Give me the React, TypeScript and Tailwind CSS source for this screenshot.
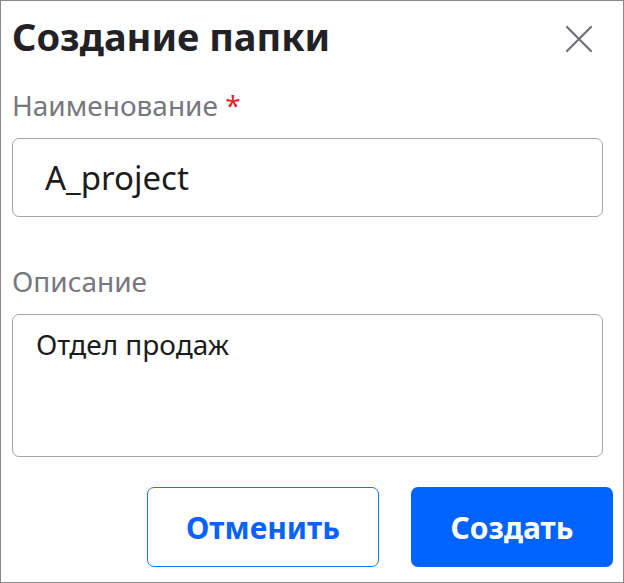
import React from "react";

export default function App() {
  return (
    <div
      className="w-[624px] h-[583px] border border-[#8a8a8a] bg-white flex flex-col"
      style={{ fontFamily: '"Noto Sans", "Open Sans", sans-serif' }}
    >
      <div className="flex items-center justify-between pl-[11px] pr-[30px] h-[69px]">
        <h1 className="text-[38px] leading-[46px] font-bold text-[#222226]">Создание папки</h1>
        <svg width="28" height="28" viewBox="0 0 28 28" className="mt-[6px]">
          <path d="M2 2 L26 26 M26 2 L2 26" stroke="#6e6f78" strokeWidth="2.2" strokeLinecap="round" />
        </svg>
      </div>
      <div className="pl-[11px] pr-[20px] mt-[17px]">
        <div className="text-[28px] leading-[36px] text-[#77777e]">
          Наименование <span className="text-[#e0262b]">*</span>
        </div>
        <div className="mt-[15px] h-[79px] rounded-[7px] border border-[#a4a4aa] flex items-center pl-[32px] text-[33px] text-[#1c1c20]">
          A_project
        </div>
        <div className="mt-[46px] text-[28px] leading-[36px] text-[#77777e]">Описание</div>
        <div className="mt-[15px] h-[143px] rounded-[7px] border border-[#a4a4aa] pl-[23px] pt-[12px] text-[28px] leading-[34px] text-[#1c1c20]">
          Отдел продаж
        </div>
      </div>
      <div className="flex justify-end gap-[32px] pr-[10px] mt-[30px]">
        <button className="w-[232px] h-[80px] rounded-[7px] border border-[#1a73ff] text-[#0862ff] text-[30px] font-bold">
          Отменить
        </button>
        <button className="w-[202px] h-[80px] rounded-[7px] bg-[#0062ff] text-white text-[30px] font-bold">
          Создать
        </button>
      </div>
    </div>
  );
}
